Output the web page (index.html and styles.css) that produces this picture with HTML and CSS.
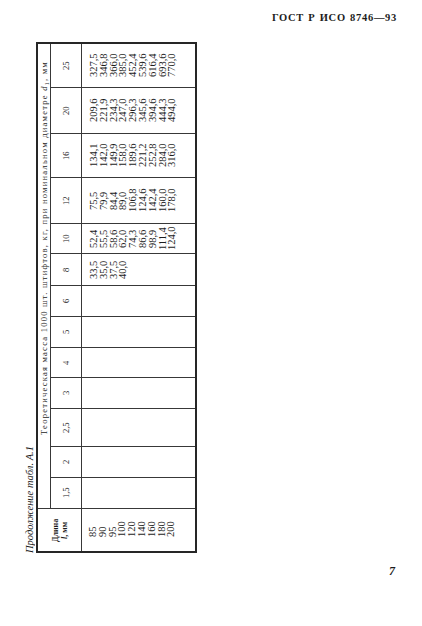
FILE: index.html
```html
<!DOCTYPE html>
<html lang="ru">
<head>
<meta charset="utf-8">
<title>ГОСТ Р ИСО 8746—93, с. 7</title>
<link rel="stylesheet" href="styles.css">
</head>
<body>
<div class="page">
  <header class="running-head">ГОСТ Р ИСО 8746—93</header>
  <main class="content">
    <div class="caption">Продолжение табл. А.1</div>
    <div class="tbl">
      <div class="cell head-len"><span>Длина<br><i>l</i>, мм</span></div>
      <div class="cell head-span">Теоретическая масса 1000 шт. штифтов, кг, при номинальном диаметре <i>d</i><sub>1</sub>, мм</div>
      <div class="cell dia">1,5</div>
      <div class="cell dia">2</div>
      <div class="cell dia">2,5</div>
      <div class="cell dia">3</div>
      <div class="cell dia">4</div>
      <div class="cell dia">5</div>
      <div class="cell dia">6</div>
      <div class="cell dia">8</div>
      <div class="cell dia">10</div>
      <div class="cell dia">12</div>
      <div class="cell dia">16</div>
      <div class="cell dia">20</div>
      <div class="cell dia">25</div>
      <div class="cell val lens">85<br>90<br>95<br>100<br>120<br>140<br>160<br>180<br>200</div>
      <div class="cell val"></div>
      <div class="cell val"></div>
      <div class="cell val"></div>
      <div class="cell val"></div>
      <div class="cell val"></div>
      <div class="cell val"></div>
      <div class="cell val"></div>
      <div class="cell val">33,5<br>35,0<br>37,5<br>40,0</div>
      <div class="cell val">52,4<br>55,5<br>58,6<br>62,0<br>74,3<br>86,6<br>98,9<br>111,4<br>124,0</div>
      <div class="cell val">75,5<br>79,9<br>84,4<br>89,0<br>106,8<br>124,6<br>142,4<br>160,0<br>178,0</div>
      <div class="cell val">134,1<br>142,0<br>149,9<br>158,0<br>189,6<br>221,2<br>252,8<br>284,0<br>316,0</div>
      <div class="cell val">209,6<br>221,9<br>234,3<br>247,0<br>296,3<br>345,6<br>394,6<br>444,3<br>494,0</div>
      <div class="cell val">327,5<br>346,8<br>366,0<br>385,0<br>452,4<br>539,6<br>616,4<br>693,6<br>770,0</div>
    </div>
  </main>
  <footer class="page-num">7</footer>
</div>
</body>
</html>
```

FILE: styles.css
```css
html, body {
  margin: 0;
  padding: 0;
  background: #ffffff;
}

.page {
  width: 422px;
  height: 626px;
  font-family: "Liberation Serif", "DejaVu Serif", serif;
  color: #1c1c1c;
  overflow: hidden;
}

.running-head {
  padding: 13px 25px 0 0;
  height: 10px;
  line-height: 10px;
  font-size: 10.5px;
  font-weight: bold;
  letter-spacing: 0.7px;
  word-spacing: 1px;
  text-align: right;
}

.content {
  margin-top: 19px;
  padding-left: 25px;
  display: flex;
  align-items: flex-end;
  gap: 2px;
}

.caption {
  writing-mode: vertical-rl;
  transform: rotate(180deg);
  font-style: italic;
  font-size: 10.5px;
  line-height: 9px;
  width: 9px;
  white-space: nowrap;
}

.tbl {
  box-sizing: border-box;
  width: 161px;
  height: 511px;
  border: 2px solid #262626;
  background: #383838;
  display: grid;
  gap: 1px;
  writing-mode: vertical-rl;
  transform: rotate(180deg);
  grid-template-columns: 42px 30px 30px 37px 30px 29px 30px 30px 31px 29px 45px 43px 45px 43px;
  grid-template-rows: 12px 30px 113px;
}

.cell {
  background: #ffffff;
  overflow: hidden;
}

.head-len {
  grid-column: 1;
  grid-row: 1 / span 2;
  display: flex;
  align-items: center;
  justify-content: center;
  text-align: center;
  font-size: 8px;
  line-height: 9px;
  font-weight: bold;
}

.head-span {
  grid-column: 2 / span 13;
  grid-row: 1;
  font-size: 8.5px;
  line-height: 12px;
  letter-spacing: 1.25px;
  white-space: nowrap;
  padding-inline-start: 73px;
}

.head-span sub {
  font-size: 6px;
}

.dia {
  grid-row: 2;
  display: flex;
  align-items: center;
  justify-content: center;
  font-size: 8.5px;
  line-height: 10px;
}

.val {
  grid-row: 3;
  font-size: 10.5px;
  line-height: 9.8px;
  text-align: center;
  padding-block-start: 7px;
}

.lens {
  text-align: start;
  padding-inline-start: 14px;
  padding-block-start: 6px;
}

.page-num {
  margin-top: 13px;
  padding-right: 27px;
  text-align: right;
  font-size: 12px;
  line-height: 10px;
  font-weight: bold;
  font-style: italic;
}
```
